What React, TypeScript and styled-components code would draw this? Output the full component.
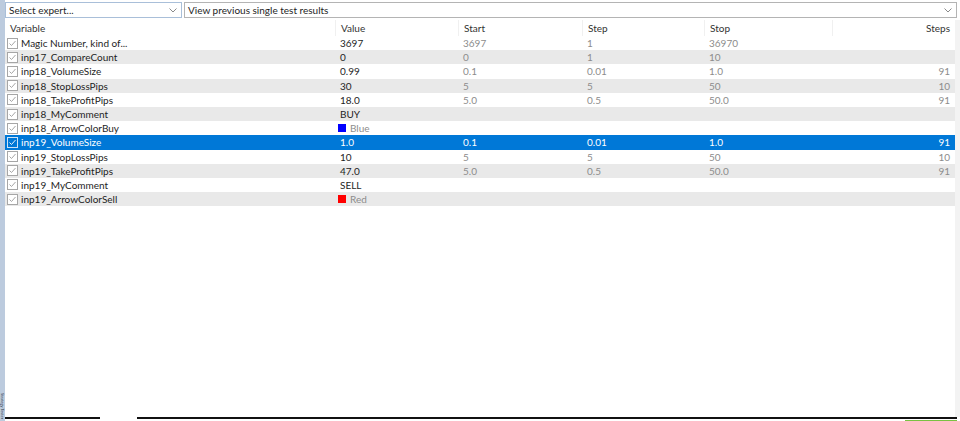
import React, { FC } from 'react'
import styled, { createGlobalStyle } from 'styled-components'

const GlobalStyle = createGlobalStyle`
  html, body {
    margin: 0;
    padding: 0;
    background: #ffffff;
  }
  body {
    font-family: Lato, 'Open Sans', 'Liberation Sans', sans-serif;
    font-size: 10px;
    color: #1e1e1e;
  }
`

const Screen = styled.div`
  width: 960px;
  height: 421px;
  display: grid;
  grid-template-columns: 5px 1fr;
  overflow: hidden;
  background: #fff;
`

const SideTab = styled.div`
  background: #bccbde;
  display: flex;
  flex-direction: column;
  justify-content: flex-end;
  align-items: center;
`

const SideLabel = styled.span`
  writing-mode: vertical-rl;
  font-size: 4px;
  line-height: 5px;
  color: #2a3442;
  white-space: nowrap;
  margin-bottom: 2px;
`

const Main = styled.div`
  display: flex;
  flex-direction: column;
  min-width: 0;
`

const Toolbar = styled.div`
  display: flex;
  gap: 2px;
  height: 20px;
  padding: 2px 3px 0 0;
  box-sizing: border-box;
`

const Combo = styled.div<{ $width?: number; $focused?: boolean }>`
  ${(p) => (p.$width ? `width: ${p.$width}px;` : 'flex: 1;')}
  height: 16px;
  box-sizing: border-box;
  border: 1px solid ${(p) => (p.$focused ? '#a9bfd9' : '#b4b4b4')};
  background: #fff;
  display: flex;
  align-items: center;
  justify-content: space-between;
  padding: 0 4px 0 3px;
  color: #1e1e1e;
`

const Body = styled.div`
  flex: 1;
  display: grid;
  grid-template-columns: 950px 1fr;
  min-height: 0;
`

const Table = styled.div`
  display: flex;
  flex-direction: column;
`

const cols = '330px 123px 124px 122px 128px 123px'

const HeaderRow = styled.div`
  display: grid;
  grid-template-columns: ${cols};
  height: 16px;
  align-items: center;
  color: #333;
`

const HeaderCell = styled.div<{ $right?: boolean }>`
  padding: 0 5px;
  height: 100%;
  display: flex;
  align-items: center;
  justify-content: ${(p) => (p.$right ? 'flex-end' : 'flex-start')};
  border-left: 1px solid #f0f0f0;
  box-sizing: border-box;
  &:first-child {
    border-left: none;
  }
`

const Row = styled.div<{ $odd: boolean; $selected?: boolean }>`
  display: grid;
  grid-template-columns: ${cols};
  height: 14.2px;
  align-items: center;
  background: ${(p) => (p.$selected ? '#0078d7' : p.$odd ? '#e9e9e9' : '#ffffff')};
  color: ${(p) => (p.$selected ? '#ffffff' : '#1e1e1e')};
`

const Cell = styled.div<{ $dim?: boolean; $right?: boolean; $sel?: boolean }>`
  padding: 0 5px;
  display: flex;
  align-items: center;
  gap: 4px;
  white-space: nowrap;
  overflow: hidden;
  justify-content: ${(p) => (p.$right ? 'flex-end' : 'flex-start')};
  color: ${(p) => (p.$sel ? '#ffffff' : p.$dim ? '#8c8c8c' : 'inherit')};
`

const NameCell = styled(Cell)`
  padding-left: 2px;
  gap: 3px;
`

const Swatch = styled.span<{ $color: string }>`
  width: 8px;
  height: 8px;
  background: ${(p) => p.$color};
  margin-left: -2px;
`

const ScrollGutter = styled.div`
  background: #f3f3f3;
`

const Footer = styled.div`
  height: 4px;
  display: flex;
  align-items: flex-start;
  padding-right: 3px;
`

const FooterPanel = styled.div<{ $width?: number; $gap?: number }>`
  ${(p) => (p.$width ? `width: ${p.$width}px;` : 'flex: 1;')}
  margin-left: ${(p) => p.$gap ?? 0}px;
  height: 4px;
  border-top: 2px solid #111;
  display: flex;
  justify-content: flex-end;
`

const Progress = styled.div`
  width: 52px;
  height: 1px;
  margin-top: 1px;
  background: #7ac142;
`

const Chevron: FC = () => (
  <svg width="8" height="5" viewBox="0 0 8 5">
    <path d="M0.5 0.5 L4 4 L7.5 0.5" fill="none" stroke="#8a8a8a" strokeWidth="1" />
  </svg>
)

const CheckBox: FC<{ selected?: boolean }> = ({ selected }) => (
  <svg width="11" height="11" viewBox="0 0 11 11">
    <rect x="0.5" y="0.5" width="10" height="10" fill={selected ? '#0078d7' : '#fff'} stroke={selected ? '#cfe3f6' : '#a6a6a6'} />
    <path d="M2.5 5.5 L4.5 7.5 L8.5 3" fill="none" stroke={selected ? '#e6f1fb' : '#a6a6a6'} strokeWidth="1" />
  </svg>
)

type ParamType = {
  name: string
  value: string
  start?: string
  step?: string
  stop?: string
  steps?: string
  swatch?: string
  dimValue?: boolean
}

const params: ParamType[] = [
  { name: 'Magic Number, kind of...', value: '3697', start: '3697', step: '1', stop: '36970' },
  { name: 'inp17_CompareCount', value: '0', start: '0', step: '1', stop: '10' },
  { name: 'inp18_VolumeSize', value: '0.99', start: '0.1', step: '0.01', stop: '1.0', steps: '91' },
  { name: 'inp18_StopLossPips', value: '30', start: '5', step: '5', stop: '50', steps: '10' },
  { name: 'inp18_TakeProfitPips', value: '18.0', start: '5.0', step: '0.5', stop: '50.0', steps: '91' },
  { name: 'inp18_MyComment', value: 'BUY' },
  { name: 'inp18_ArrowColorBuy', value: 'Blue', swatch: '#0000ff', dimValue: true },
  { name: 'inp19_VolumeSize', value: '1.0', start: '0.1', step: '0.01', stop: '1.0', steps: '91' },
  { name: 'inp19_StopLossPips', value: '10', start: '5', step: '5', stop: '50', steps: '10' },
  { name: 'inp19_TakeProfitPips', value: '47.0', start: '5.0', step: '0.5', stop: '50.0', steps: '91' },
  { name: 'inp19_MyComment', value: 'SELL' },
  { name: 'inp19_ArrowColorSell', value: 'Red', swatch: '#ff0000', dimValue: true },
]

const SELECTED = 7

const ParamRow: FC<{ p: ParamType; index: number }> = ({ p, index }) => {
  const sel = index === SELECTED
  return (
    <Row $odd={index % 2 === 1} $selected={sel}>
      <NameCell $sel={sel}>
        <CheckBox selected={sel} />
        {p.name}
      </NameCell>
      <Cell $sel={sel} $dim={p.dimValue}>
        {p.swatch && <Swatch $color={p.swatch} />}
        {p.value}
      </Cell>
      <Cell $sel={sel} $dim>{p.start}</Cell>
      <Cell $sel={sel} $dim>{p.step}</Cell>
      <Cell $sel={sel} $dim>{p.stop}</Cell>
      <Cell $sel={sel} $dim $right>{p.steps}</Cell>
    </Row>
  )
}

export default function App() {
  return (
    <>
      <GlobalStyle />
      <Screen>
        <SideTab>
          <SideLabel>Strategy Tester</SideLabel>
        </SideTab>
        <Main>
          <Toolbar>
            <Combo $width={177} $focused>
              <span>Select expert...</span>
              <Chevron />
            </Combo>
            <Combo>
              <span>View previous single test results</span>
              <Chevron />
            </Combo>
          </Toolbar>
          <Body>
            <Table>
              <HeaderRow>
                <HeaderCell>Variable</HeaderCell>
                <HeaderCell>Value</HeaderCell>
                <HeaderCell>Start</HeaderCell>
                <HeaderCell>Step</HeaderCell>
                <HeaderCell>Stop</HeaderCell>
                <HeaderCell $right>Steps</HeaderCell>
              </HeaderRow>
              {params.map((p, i) => (
                <ParamRow key={p.name} p={p} index={i} />
              ))}
            </Table>
            <ScrollGutter />
          </Body>
          <Footer>
            <FooterPanel $width={95} />
            <FooterPanel $gap={37}>
              <Progress />
            </FooterPanel>
          </Footer>
        </Main>
      </Screen>
    </>
  )
}
